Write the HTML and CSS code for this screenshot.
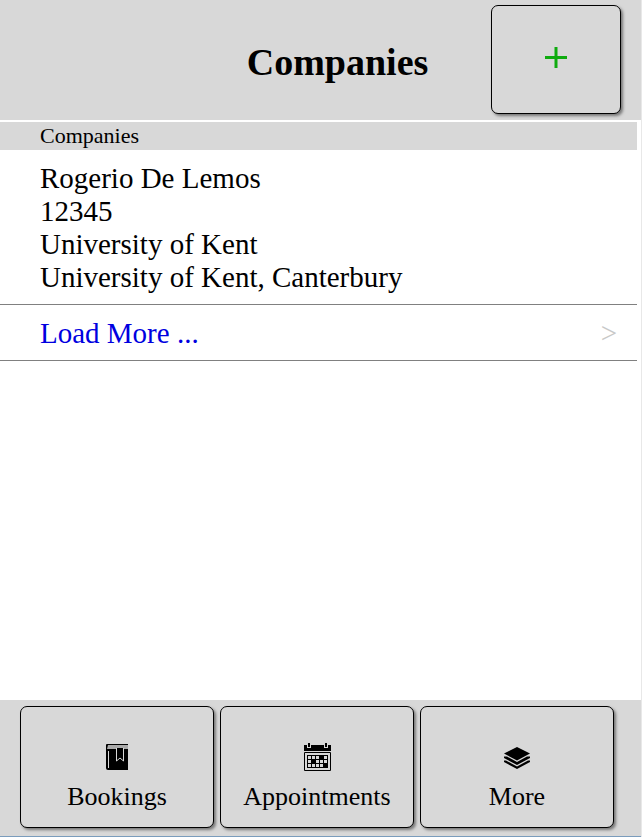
FILE: index.html
```html
<!DOCTYPE html>
<html lang="en">
<head>
<meta charset="utf-8">
<meta name="viewport" content="width=device-width, initial-scale=1">
<title>Companies</title>
<link rel="stylesheet" href="styles.css">
</head>
<body>
<header class="header">
  <h1 class="title">Companies</h1>
  <button class="button add" type="button" aria-label="Add company">
    <svg width="22" height="22" viewBox="0 0 22 22" aria-hidden="true"><path d="M0 10.5H22M11 0V21" stroke="#0fab0f" stroke-width="3"/></svg>
  </button>
</header>
<main class="content">
  <h2 class="section">Companies</h2>
  <ul class="list">
    <li class="row">
      <div>
        <p>Rogerio De Lemos</p>
        <p>12345</p>
        <p>University of Kent</p>
        <p>University of Kent, Canterbury</p>
      </div>
    </li>
    <li><a class="row" href="#more"><span>Load More ...</span><span class="chevron" aria-hidden="true">&gt;</span></a></li>
  </ul>
</main>
<nav class="nav">
  <button class="button tab" type="button">
    <svg width="28" height="28" viewBox="0 0 28 28" aria-hidden="true">
      <path d="M4 1H25V27H5Q3 27 3 25V2Q3 1 4 1Z"/>
      <path d="M5 2H25V6H4Z" fill="#aaa"/>
      <path d="M5.5 8V25" stroke="#d8d8d8"/>
      <path d="M13.5 5V18L17 15L20.5 18V5" fill="#000" stroke="#d8d8d8"/>
    </svg>
    <span>Bookings</span>
  </button>
  <button class="button tab" type="button">
    <svg width="28" height="28" viewBox="0 0 28 28" aria-hidden="true">
      <path d="M1 2H28V8H1Z"/>
      <path d="M4 0H8V5H4ZM21 0H25V5H21Z" fill="#d8d8d8"/>
      <path d="M5 0H7V4H5ZM22 0H24V4H22Z"/>
      <path d="M1.5 9.5H27.5V27.5H1.5Z" fill="none" stroke="#000"/>
      <path d="M4 12H25V25H4Z"/>
      <path d="M5 13h3v3h-3zM9 13h3v3h-3zM13 13h3v3h-3zM21 13h3v3h-3zM5 17h3v3h-3zM13 17h3v3h-3zM17 17h3v3h-3zM21 17h3v3h-3zM5 21h3v3h-3zM9 21h3v3h-3zM13 21h3v3h-3zM17 21h3v3h-3z" fill="#d8d8d8"/>
    </svg>
    <span>Appointments</span>
  </button>
  <button class="button tab" type="button">
    <svg width="28" height="28" viewBox="0 0 28 28" aria-hidden="true">
      <path d="M14 4L27 10.5L14 17.5L1 10.5Z"/>
      <path d="M1 13.5H4L14 19L24 13.5H27V15L14 22L1 15Z"/>
      <path d="M1 17.5H3L14 23.5L25 17.5H27V19L14 26L1 19Z"/>
    </svg>
    <span>More</span>
  </button>
</nav>
</body>
</html>
```
FILE: styles.css
```css
* {
  box-sizing: border-box;
}

body {
  display: flex;
  flex-direction: column;
  min-height: 100vh;
  margin: 0;
  border-right: 1px solid #e8e8e8;
  background: #fff;
  color: #000;
  font-family: "Liberation Serif", "Times New Roman", serif;
  font-size: 29px;
  line-height: 33px;
}

h1, h2, p, ul {
  margin: 0;
  padding: 0;
}

.header {
  display: grid;
  grid-template-columns: 29% 1fr 130px;
  align-items: center;
  padding: 5px 20px 6px 0;
  background: #d8d8d8;
}

.title {
  grid-column: 2;
  padding-left: 4px;
  padding-top: 4px;
  font-size: 38px;
  line-height: 44px;
  text-align: center;
}

.button {
  display: flex;
  flex-direction: column;
  align-items: center;
  padding: 0;
  border: 1px solid #000;
  border-radius: 7px;
  background: #d8d8d8;
  box-shadow: 2px 2px 3px #777;
  color: #000;
  font-family: inherit;
  font-size: 26px;
  line-height: 30px;
}

.add {
  justify-content: center;
  height: 109px;
  padding-bottom: 4px;
}

.content {
  flex: 1;
  padding: 2px 4px 0 0;
}

.section {
  padding-left: 40px;
  background: #d8d8d8;
  font-size: 22px;
  font-weight: normal;
  line-height: 28px;
}

.list {
  list-style: none;
}

.row {
  display: flex;
  justify-content: space-between;
  padding: 12px 20px 10px 40px;
  border-bottom: 1px solid #808080;
}

a.row {
  color: #0000e0;
  text-decoration: none;
}

a.row .chevron {
  color: #c8c8c8;
}

.nav {
  display: grid;
  grid-template-columns: repeat(3, 1fr);
  gap: 6px;
  padding: 6px 27px 8px 20px;
  border-bottom: 1px solid #7a9cbc;
  background: #d8d8d8;
}

.tab {
  justify-content: flex-end;
  gap: 11px;
  height: 122px;
  padding-bottom: 15px;
}
```
